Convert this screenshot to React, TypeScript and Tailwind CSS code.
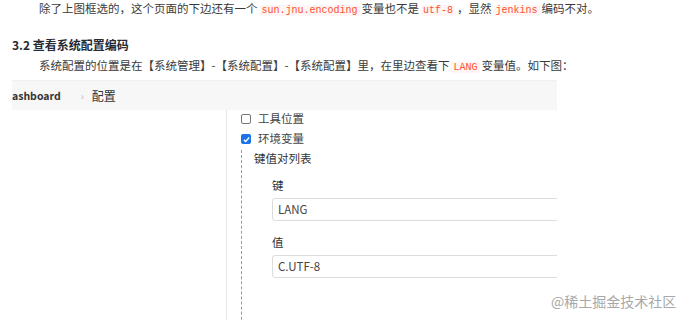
import React from 'react';

const cjk = 'font-["Noto_Sans_CJK_SC",sans-serif]';

const Code = ({ children }: { children: React.ReactNode }) => (
  <code className='mx-[2px] rounded-[2px] bg-[#fff5f5] px-[2px] font-["Liberation_Mono",monospace] text-[10px] leading-none text-[#ff502c]'>
    {children}
  </code>
);

const Checkbox = ({ checked }: { checked?: boolean }) =>
  checked ? (
    <span className="flex h-[10px] w-[10px] items-center justify-center rounded-[2px] bg-[#1a73e8]">
      <svg viewBox="0 0 10 10" className="h-[9px] w-[9px]">
        <path d="M2 5.2 L4.1 7.2 L8 2.8" fill="none" stroke="#fff" strokeWidth="1.6" />
      </svg>
    </span>
  ) : (
    <span className="h-[10px] w-[10px] rounded-[2px] border border-[#767676] bg-white" />
  );

const Field = ({ label, value, gap }: { label: string; value: string; gap: string }) => (
  <div className={gap}>
    <div className="text-[11.5px] leading-[16px] text-[#333]">{label}</div>
    <div className="mt-[5px] flex h-[23px] w-[400px] items-center rounded-[3px] border border-[#dcdcdc] bg-white pl-[5px] text-[11.5px] text-[#444]">
      {value}
    </div>
  </div>
);

export default function App() {
  return (
    <main className={`relative h-[320px] w-[692px] overflow-hidden bg-white ${cjk}`}>
      <article className="pl-[12px] text-[#3a3a3a]">
        <p className="h-[16px] pl-[27px] text-[11.5px] leading-[16px]">
          除了上图框选的，这个页面的下边还有一个<Code>sun.jnu.encoding</Code>变量也不是<Code>utf-8</Code>，显然<Code>jenkins</Code>编码不对。
        </p>
        <h3 className="mt-[19px] h-[20px] text-[12px] font-bold leading-[20px] text-[#252933]">3.2 查看系统配置编码</h3>
        <p className="h-[20px] pl-[27px] text-[11.5px] leading-[20px]">
          系统配置的位置是在【系统管理】-【系统配置】-【系统配置】里，在里边查看下<Code>LANG</Code>变量值。如下图：
        </p>

        {/* screenshot of jenkins config */}
        <div className="mt-[5px] h-[240px] w-[545px] overflow-hidden">
          <div className="flex h-[30px] items-center border-t border-[#f0f0f0] bg-[#f7f7f7] text-[12px]">
            <span className="text-[10.5px] font-bold text-[#333]">ashboard</span>
            <span className="ml-[20px] text-[10px] text-[#bbb]">›</span>
            <span className="ml-[8px] text-[#333]">配置</span>
          </div>
          <div className="flex h-full">
            <div className="w-[215px] shrink-0 border-r border-[#e6e6e6]" />
            <div className="flex-1 pl-[14px]">
              <div className="flex flex-col gap-[2px]">
                <label className="flex h-[18px] items-center gap-[7px] text-[11.5px] text-[#444]">
                  <Checkbox />
                  工具位置
                </label>
                <label className="flex h-[18px] items-center gap-[7px] text-[11.5px] text-[#444]">
                  <Checkbox checked />
                  环境变量
                </label>
              </div>
              <div className="mt-[2px] h-[200px] border-l border-dashed border-[#999] pl-[12px]">
                <div className="text-[11.5px] leading-[16px] text-[#333]">键值对列表</div>
                <div className="pl-[18px]">
                  <Field label="键" value="LANG" gap="mt-[11px]" />
                  <Field label="值" value="C.UTF-8" gap="mt-[13px]" />
                </div>
              </div>
            </div>
          </div>
        </div>
      </article>

      <span className="absolute left-[551px] top-[292px] text-[14px] leading-[18px] text-[#a8a8a8]">
        @稀土掘金技术社区
      </span>
    </main>
  );
}
